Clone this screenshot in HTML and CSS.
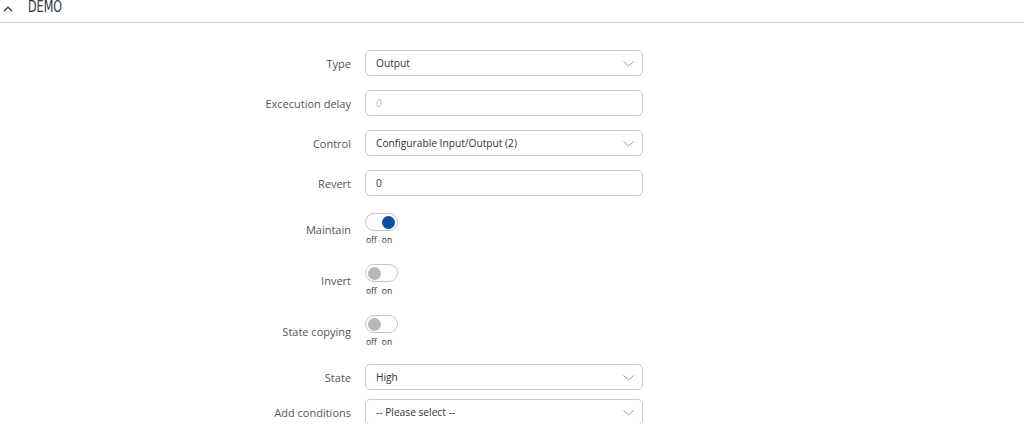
FILE: index.html
```html
<!DOCTYPE html>
<html>
<head>
<meta charset="utf-8">
<link rel="stylesheet" href="styles.css">
</head>
<body>
<div class="section">
  <div class="section-head">
    <svg class="caret" width="10" height="6" viewBox="0 0 10 6"><path d="M1 5.2 L5 1.2 L9 5.2" fill="none" stroke="#444" stroke-width="1.3"/></svg>
    <span class="section-title">DEMO</span>
  </div>
  <div class="form">
    <div class="row">
      <label class="lbl">Type</label>
      <div class="ctl select"><span>Output</span><svg class="chev" width="11" height="6" viewBox="0 0 11 6"><path d="M0.5 0.5 L5.5 5 L10.5 0.5" fill="none" stroke="#9a9a9a" stroke-width="1"/></svg></div>
    </div>
    <div class="row">
      <label class="lbl">Excecution delay</label>
      <div class="ctl"><span class="ph">0</span></div>
    </div>
    <div class="row">
      <label class="lbl">Control</label>
      <div class="ctl select"><span>Configurable Input/Output (2)</span><svg class="chev" width="11" height="6" viewBox="0 0 11 6"><path d="M0.5 0.5 L5.5 5 L10.5 0.5" fill="none" stroke="#9a9a9a" stroke-width="1"/></svg></div>
    </div>
    <div class="row">
      <label class="lbl">Revert</label>
      <div class="ctl"><span>0</span></div>
    </div>
    <div class="row trow first">
      <label class="lbl">Maintain</label>
      <div class="tgl-wrap">
        <div class="tgl on"><span class="knob"></span></div>
        <div class="offon"><span>off</span><span>on</span></div>
      </div>
    </div>
    <div class="row trow">
      <label class="lbl">Invert</label>
      <div class="tgl-wrap">
        <div class="tgl"><span class="knob"></span></div>
        <div class="offon"><span>off</span><span>on</span></div>
      </div>
    </div>
    <div class="row trow">
      <label class="lbl">State copying</label>
      <div class="tgl-wrap">
        <div class="tgl"><span class="knob"></span></div>
        <div class="offon"><span>off</span><span>on</span></div>
      </div>
    </div>
    <div class="row state">
      <label class="lbl">State</label>
      <div class="ctl select"><span>High</span><svg class="chev" width="11" height="6" viewBox="0 0 11 6"><path d="M0.5 0.5 L5.5 5 L10.5 0.5" fill="none" stroke="#9a9a9a" stroke-width="1"/></svg></div>
    </div>
    <div class="row cond">
      <label class="lbl">Add conditions</label>
      <div class="ctl select"><span>-- Please select --</span><svg class="chev" width="11" height="6" viewBox="0 0 11 6"><path d="M0.5 0.5 L5.5 5 L10.5 0.5" fill="none" stroke="#9a9a9a" stroke-width="1"/></svg></div>
    </div>
  </div>
</div>
</body>
</html>
```
FILE: styles.css
```css
html, body {
  margin: 0;
  padding: 0;
  background: #fff;
  overflow: hidden;
}
body {
  font-family: "Open Sans", "Liberation Sans", sans-serif;
  font-size: 11px;
  color: #555;
}
.section-head {
  height: 22px;
  border-bottom: 1px solid #cfcfcf;
  display: flex;
  align-items: flex-start;
  box-sizing: content-box;
}
.caret {
  margin: 6px 0 0 3px;
  flex: none;
}
.section-title {
  margin-left: 15px;
  margin-top: 0;
  font-family: "DejaVu Sans Condensed", "DejaVu Sans", sans-serif;
  font-stretch: condensed;
  font-size: 15.5px;
  line-height: 15px;
  color: #2e3640;
  transform: scaleX(0.8);
  transform-origin: left center;
}
.form {
  display: flex;
  flex-direction: column;
  padding-top: 27px;
}
.row {
  display: flex;
  align-items: center;
  margin-bottom: 14px;
}
.lbl {
  width: 365px;
  text-align: right;
  padding-right: 14px;
  box-sizing: border-box;
  flex: none;
  color: #555;
  font-size: 11px;
}
.ctl {
  width: 278px;
  height: 26px;
  box-sizing: border-box;
  border: 1px solid #c9c9c9;
  border-radius: 5px;
  display: flex;
  align-items: center;
  padding: 0 10px;
  color: #333;
  font-size: 10.2px;
  position: relative;
}
.ctl .ph {
  color: #bbb;
  font-style: italic;
}
.select .chev {
  position: absolute;
  right: 8px;
  top: 10px;
}
.trow {
  margin-bottom: 18px;
}
.trow.first {
  margin-top: 3px;
}
.tgl-wrap {
  display: flex;
  flex-direction: column;
}
.tgl {
  width: 33px;
  height: 18px;
  box-sizing: border-box;
  border: 1px solid #c6c6c6;
  border-radius: 9px;
  background: #fff;
  position: relative;
}
.knob {
  position: absolute;
  top: 1.5px;
  left: 2px;
  width: 13px;
  height: 13px;
  border-radius: 50%;
  background: #b8b8b8;
}
.tgl.on .knob {
  left: auto;
  right: 2px;
  background: #0b4ea2;
}
.offon {
  display: flex;
  gap: 5px;
  margin-top: 3px;
  padding-left: 1px;
  font-size: 8.5px;
  line-height: 12px;
  color: #333;
}
.state {
  margin-top: -2px;
  margin-bottom: 9px;
}
```
